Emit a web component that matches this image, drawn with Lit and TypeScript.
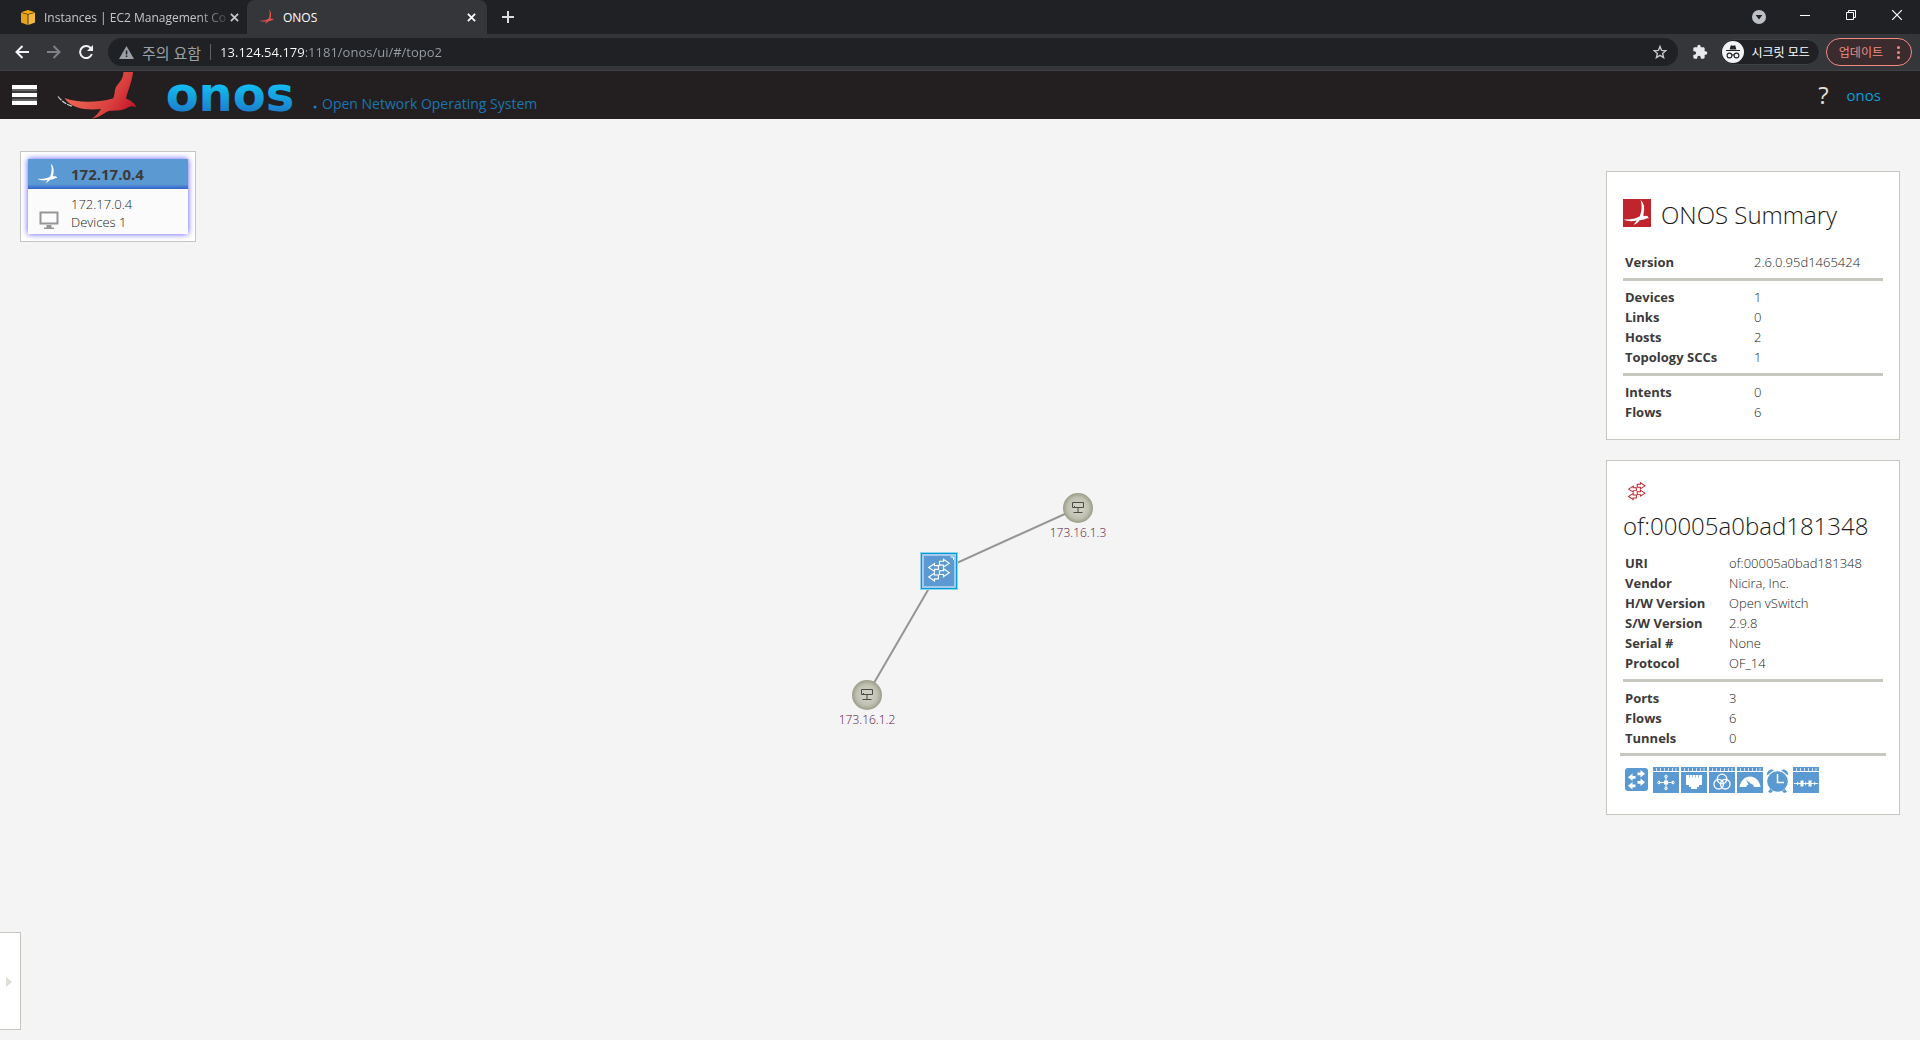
import { LitElement, html, svg, css } from "lit";
import { customElement, property } from "lit/decorators.js";

const bird = svg`<path d="M17.6 1C21.500 4.500 22 10 20.200 16.400L21.800 17.200C23.200 16.400 25 17 25.800 19.400C23.600 18.600 22.600 20 20.400 20.600L16.400 21.400C15.400 23 13.600 24.800 10.600 25.800C12 24.200 13 23 13.400 21.600C9 22.600 4 22.400 .6 20.200C6 20.800 12 20 16.800 17.200C18.800 12 19.400 7 17.600 1Z"/>`;

const switchArrows = svg`
  <path d="M12.800 5h4.400V2.600l6.400 4.600-6.400 4.600V9.400h-4.400z"/>
  <path d="M12.800 16h4.400v-2.400l6.400 4.600-6.400 4.600v-2.400h-4.400z"/>
  <path d="M11.600 10H7.200V7.600L.8 12.200l6.400 4.600v-2.400h4.400z"/>
  <path d="M11.600 21H7.200v-2.400L.8 23.200l6.400 4.600v-2.400h4.400z"/>`;

@customElement("browser-chrome")
export class BrowserChrome extends LitElement {
  static styles = css`
    :host { display: block; font-family: "Open Sans", "Noto Sans CJK KR", sans-serif; color: #e8eaed; }
    button { border: 0; padding: 0; margin: 0; background: none; color: inherit; font: inherit; display: flex; align-items: center; justify-content: center; }
    svg { display: block; flex: none; }
    .strip { display: flex; height: 34px; background: #202124; font-size: 12px; }
    .tab { display: flex; align-items: center; box-sizing: border-box; width: 247px; padding: 0 8px 0 20px; gap: 8px; color: #c4c7cb; }
    .tab.active { width: 240px; background: #35363a; border-radius: 8px 8px 0 0; color: #fff; padding: 0 8px 0 12px; }
    .label { flex: 1; white-space: nowrap; }
    .fade { margin-right: -8px; mask-image: linear-gradient(90deg, #000 84%, transparent 104%); }
    .close { width: 16px; height: 16px; flex: none; }
    .plus { width: 42px; }
    .spacer { flex: 1; }
    .win { width: 46px; height: 30px; }
    .bar { display: flex; align-items: center; height: 36px; background: #35363a; border-bottom: 1px solid #3f4043; padding: 0 8px 0 6px; }
    .nav { width: 32px; height: 28px; }
    .reload { margin-right: 6px; }
    .omni { display: flex; align-items: center; flex: 1; height: 28px; border-radius: 14px; background: #202124; padding: 0 11px; font-size: 13px; }
    .warn { color: #9aa0a6; gap: 8px; font-size: 15px; }
    .rule { width: 1px; height: 16px; background: #5f6368; margin: 0 9px; }
    .url { flex: 1; min-width: 0; border: 0; outline: 0; padding: 0; font: inherit; color: transparent; background: linear-gradient(90deg, #fff 85px, #9aa0a6 85px); background-clip: text; -webkit-background-clip: text; }
    .ext { width: 16px; margin: 0 12px 0 14px; }
    .incog { height: 26px; box-sizing: border-box; border: 1px solid #3f4043; border-radius: 13px; background: #202124; padding: 0 9px 0 1px; gap: 8px; font-size: 12px; color: #fff; white-space: nowrap; }
    .update { height: 28px; box-sizing: border-box; border: 1px solid #f28b82; border-radius: 14px; background: #3a2c2e; color: #f28b82; padding: 0 11px 0 12px; gap: 14px; font-size: 12px; margin-left: 6px; white-space: nowrap; }
  `;

  private cross(color: string, size: number) {
    return html`<svg width=${size} height=${size} viewBox="0 0 10 10" fill="none" stroke=${color} stroke-width=${size > 9 ? 1 : 2}><path d="M1 1l8 8M9 1l-8 8"/></svg>`;
  }

  render() {
    return html`
      <div class="strip">
        <div class="tab">
          <svg width="16" height="16" viewBox="0 0 16 16"><path d="M1 3.800L7.600 5.600V16L1 13.600z" fill="#e8a11c"/><path d="M15 3.800L8.400 5.600V16L15 13.600z" fill="#f3b73c"/><path d="M8 1l7 2.200-7 1.900-7-1.900z" fill="#f6a90f"/></svg>
          <span class="label fade">Instances | EC2 Management Co</span>
          <button class="close" aria-label="Close tab">${this.cross("#c4c7cb", 9)}</button>
        </div>
        <div class="tab active">
          <svg width="16" height="16" viewBox="0 0 28 28" fill="#e0524c">${bird}</svg>
          <span class="label">ONOS</span>
          <button class="close" aria-label="Close tab">${this.cross("#fff", 9)}</button>
        </div>
        <button class="plus" aria-label="New tab"><svg width="12" height="12" viewBox="0 0 12 12" stroke="#dadce0" stroke-width="2"><path d="M6 0v12M0 6h12"/></svg></button>
        <div class="spacer"></div>
        <button class="win" aria-label="Search tabs"><svg width="14" height="22" viewBox="0 0 14 22"><circle cx="7" cy="13" r="7" fill="#bdc1c6"/><path d="M3.600 11h6.800L7 15.400z" fill="#202124"/></svg></button>
        <button class="win" aria-label="Minimize"><svg width="10" height="10" viewBox="0 0 10 10" fill="#fff"><rect y="5" width="10" height="1"/></svg></button>
        <button class="win" aria-label="Restore"><svg width="10" height="10" viewBox="0 0 10 10" fill="none" stroke="#fff"><path d="M.5 2.500h7v7h-7zM2.500 2.500v-2h7v7h-2"/></svg></button>
        <button class="win" aria-label="Close window">${this.cross("#fff", 12)}</button>
      </div>
      <div class="bar">
        <button class="nav" aria-label="Back"><svg width="14" height="14" viewBox="0 0 14 14" fill="none" stroke="#f1f3f4" stroke-width="2"><path d="M14 7H2M7.500 1L1.500 7l6 6"/></svg></button>
        <button class="nav" aria-label="Forward"><svg width="14" height="14" viewBox="0 0 14 14" fill="none" stroke="#7e8185" stroke-width="2"><path d="M0 7h12M6.500 1l6 6-6 6"/></svg></button>
        <button class="nav reload" aria-label="Reload"><svg width="14" height="14" viewBox="0 0 14 14" fill="none" stroke="#f1f3f4" stroke-width="2"><path d="M12 3.600A6 6 0 1 0 12.800 9"/><path d="M14 0v6H8z" fill="#f1f3f4" stroke="none"/></svg></button>
        <div class="omni">
          <button class="warn"><svg width="15" height="14" viewBox="0 0 15 14"><path d="M7.500 1L15 14H0z" fill="#9aa0a6"/><path d="M6.800 5.400h1.500v4H6.800zM6.800 10.600h1.500v1.500H6.800z" fill="#202124"/></svg>주의 요함</button>
          <span class="rule"></span>
          <input class="url" aria-label="Address" .value=${"13.124.54.179:1181/onos/ui/#/topo2"}>
          <button aria-label="Bookmark"><svg width="14" height="14" viewBox="0 0 14 14" fill="none" stroke="#c4c7cb" stroke-width="1.400"><path d="M7 1.400l1.600 4 4.200.3-3.200 2.700 1 4.200L7 10.400l-3.600 2.200 1-4.200L1.200 5.700l4.200-.3z"/></svg></button>
        </div>
        <button class="ext" aria-label="Extensions"><svg width="16" height="16" viewBox="0 0 24 24" fill="#e8eaed"><path d="M20.500 11H19V7c0-1.100-.9-2-2-2h-4V3.500a2.500 2.500 0 0 0-5 0V5H4c-1.100 0-2 .9-2 2v3.800h1.500a2.700 2.700 0 0 1 0 5.400H2V20c0 1.100.9 2 2 2h3.800v-1.500a2.700 2.700 0 0 1 5.400 0V22H17c1.100 0 2-.9 2-2v-4h1.500a2.500 2.500 0 0 0 0-5z"/></svg></button>
        <button class="incog"><svg width="22" height="22" viewBox="0 0 22 22"><circle cx="11" cy="11" r="11" fill="#f1f3f4"/><path d="M7.600 8.500l1.200-4.300 2.200.6 2.200-.6 1.200 4.300z" fill="#202124"/><path d="M4 9.500h14" stroke="#202124"/><g fill="none" stroke="#202124" stroke-width="1.100"><circle cx="7.500" cy="14.500" r="2.400"/><circle cx="14.500" cy="14.500" r="2.400"/><path d="M9.900 14.200q1.100-.8 2.200 0"/></g></svg>시크릿 모드</button>
        <button class="update">업데이트<svg width="3" height="13" viewBox="0 0 3 13" fill="#f28b82"><circle cx="1.500" cy="1.500" r="1.500"/><circle cx="1.500" cy="6.500" r="1.500"/><circle cx="1.500" cy="11.500" r="1.500"/></svg></button>
      </div>`;
  }
}

@customElement("onos-masthead")
export class OnosMasthead extends LitElement {
  static styles = css`
    :host { display: flex; align-items: center; height: 48px; background: #231f20; padding: 0 39px 0 12px; font-family: "Open Sans", sans-serif; }
    svg { display: block; flex: none; overflow: visible; }
    button { border: 0; padding: 0; background: none; display: block; }
    .home { display: flex; align-items: center; margin-left: 21px; text-decoration: none; }
    .word { font-family: "DejaVu Sans", sans-serif; font-size: 48px; font-weight: 700; }
    .tag { color: #1b75b0; font-size: 14px; line-height: 20px; padding-top: 18px; margin-left: 5px; white-space: nowrap; }
    .spacer { flex: 1; }
    .help { color: #e0dfd5; text-decoration: none; font-size: 24px; line-height: 32px; margin-right: 18px; }
    .user { color: #009fdb; text-decoration: none; font-size: 15px; line-height: 20px; }
  `;

  render() {
    return html`
      <button aria-label="Navigation"><svg width="25" height="20" viewBox="0 0 25 20"><rect y="3" width="25" height="14" fill="#3c3a3a"/><path d="M0 5h25M0 15h25" stroke="#8d8c8c"/><path d="M0 2h25M0 10h25M0 18h25" stroke="#fff" stroke-width="4"/></svg></button>
      <a class="home" href="#/" aria-label="ONOS home">
        <svg width="88" height="48" viewBox="58 71 88 48">
          <defs><linearGradient id="wing" gradientUnits="userSpaceOnUse" x1="90" y1="80" x2="132" y2="108"><stop offset="0" stop-color="#e8604f"/><stop offset=".6" stop-color="#d93f3d"/><stop offset="1" stop-color="#c5182b"/></linearGradient></defs>
          <path d="M58 96.500q6 7.500 14 9.600" fill="none" stroke="#d8d6d6" stroke-width="1.200" stroke-dasharray="5 1"/>
          <path d="M64.500 98C78 103 96 103 113 98.500C115.500 94 114 91 116 87C119 82 123 80 123.500 72H133C132 82 128 90 126 98.500C128 100 129.500 99.600 131.500 101.500C134 103 135.500 105 136 107.500C133 105.500 130 106 127 108C121 111.500 114 109.800 108 111.300C103 114 98 118 92 118.500C96 116 98.500 113 101 109C88 110.500 71 109 64.500 98Z" fill="url(#wing)"/>
        </svg>
        <svg width="171" height="48" viewBox="0 0 171 48">
          <defs><linearGradient id="sea" gradientUnits="userSpaceOnUse" x1="0" y1="14" x2="0" y2="40"><stop offset="0" stop-color="#12bdf0"/><stop offset="1" stop-color="#1c80cc"/></linearGradient></defs>
          <text class="word" x="84" y="40" text-anchor="middle" fill="url(#sea)">onos</text>
          <circle cx="169" cy="36" r="1.500" fill="#1c80cc"/>
        </svg>
        <span class="tag">Open Network Operating System</span>
      </a>
      <div class="spacer"></div>
      <a class="help" href="#/help" aria-label="Help">?</a>
      <a class="user" href="#/user">onos</a>`;
  }
}

type Row = [string, string];

@customElement("props-table")
export class PropsTable extends LitElement {
  @property({ attribute: false }) groups: Row[][] = [];
  @property({ type: Boolean, reflect: true }) wide = false;

  static styles = css`
    :host { display: block; }
    table { border-collapse: collapse; font-size: 13px; line-height: 20px; color: #1c1a1b; }
    th { width: 104px; padding: 0 0 0 2px; text-align: left; font-weight: 700; color: #3c3a3a; }
    :host([wide]) th { width: 129px; }
    td { padding: 0; font-weight: 300; }
    hr { border: 0; height: 3px; background: #c7c7c0; margin: 6px 0; }
  `;

  render() {
    return this.groups.map((g, i) => html`
      ${i ? html`<hr>` : ""}
      <table><tbody>${g.map(([k, v]) => html`<tr><th scope="row">${k}</th><td>${v}</td></tr>`)}</tbody></table>`);
  }
}

const boxed = (inner: unknown) => svg`
  <rect width="26" height="4" fill="#5b99d2"/>
  <path d="M3.500 1v3M7.500 1v3M11.500 1v3M15.500 1v3M19.500 1v3M23 1v3" stroke="#cfe1f2"/>
  <rect y="5" width="26" height="21" fill="#5b99d2"/>${inner}`;

const ACTIONS: [string, unknown][] = [
  ["Show device view", svg`<rect y="1" x="0" width="23" height="23" rx="3" fill="#5b99d2"/><g fill="#fff"><path d="M12.500 5.500h3V3l4.500 3.800-4.500 3.800V8.200h-3zM12.500 14h3v-2.500l4.500 3.800-4.500 3.800v-2.400h-3zM10.500 9h-3V6.500L3 10.300l4.500 3.800v-2.400h3zM10.500 17.500h-3V15L3 18.800l4.500 3.800v-2.400h3z"/></g>`],
  ["Show flow view", boxed(svg`<g stroke="#fff" fill="none"><path d="M6 15.500h14M13 9v13"/><circle cx="6" cy="15.500" r="1.300"/><circle cx="20" cy="15.500" r="1.300"/><circle cx="13" cy="9.500" r="1.300"/><circle cx="13" cy="21.500" r="1.300"/></g><rect x="11" y="13.500" width="4" height="4" fill="#fff"/>`)],
  ["Show port view", boxed(svg`<path d="M5 8h16v10h-3v2h-2v2h-6v-2H8v-2H5z" fill="#fff"/><path d="M8.500 8v2.500M11.500 8v2.500M14.500 8v2.500M17.500 8v2.500" stroke="#9cc2e4"/>`)],
  ["Show group view", boxed(svg`<g stroke="#fff" fill="none" stroke-width="1.300"><circle cx="13" cy="12" r="4.800"/><circle cx="9.700" cy="17.200" r="4.800"/><circle cx="16.300" cy="17.200" r="4.800"/></g>`)],
  ["Show meter view", boxed(svg`<path d="M2.500 20C4 13 8 9.500 13 9.500S22.500 13 23.500 20H17Q16.500 17 13.500 16.500L9 12.500L11.500 17.500Q9.500 18 9 20z" fill="#fff"/>`)],
  ["Show pipeconf view", svg`<g fill="#5b99d2"><circle cx="12.500" cy="14.500" r="10.300"/><path d="M2 8.500A5 5 0 0 1 9 3zM23 8.500A5 5 0 0 0 16 3zM5 22l-2 3 3 1 2-2zM20 22l2 3-3 1-2-2z"/></g><path d="M12.500 7v8.500H19" fill="none" stroke="#fff" stroke-width="1.500"/>`],
  ["Show tunnels", boxed(svg`<path d="M1 16.500h24" stroke="#fff"/><rect x="7.500" y="13.500" width="3" height="6" fill="#fff"/><rect x="15.500" y="13.500" width="3" height="6" fill="#fff"/><path d="M4 14.500l2 2-2 2zM12 14.500l2 2-2 2zM21 14.500l2 2-2 2z" fill="#fff"/>`)],
];

@customElement("topo-view")
export class TopoView extends LitElement {
  static styles = css`
    :host { display: flex; position: relative; flex: 1; align-items: flex-start; justify-content: space-between; padding: 0 20px; background: #f4f4f4; font-family: "Open Sans", sans-serif; color: #1c1a1b; }
    .map { position: absolute; inset: 0; width: 100%; height: 100%; display: block; }
    .map text { font-size: 12px; font-weight: 300; fill: #561540; text-anchor: middle; }
    .left { display: flex; flex-direction: column; justify-content: space-between; align-self: stretch; position: relative; }
    .cluster { margin-top: 32px; border: 1px solid #c7c7c0; background: #fff; padding: 7px; }
    .inst { width: 160px; background: #fbfbfb; box-shadow: 0 0 6px #5a50ff; font-size: 13px; }
    .inst-head { display: flex; align-items: center; height: 30px; padding-left: 9px; gap: 12px; background: linear-gradient(#5b99d2 84%, #2f62cc); color: #3c3a3a; font-size: 15px; font-weight: 700; }
    .inst-body { display: flex; align-items: flex-end; height: 45px; padding: 0 0 3px 11px; gap: 12px; box-sizing: border-box; font-weight: 300; line-height: 18px; }
    .inst svg { display: block; flex: none; }
    .drawer { width: 21px; height: 98px; box-sizing: border-box; margin: 0 0 10px -20px; padding: 2px 0 0 6px; background: #fff; border: 1px solid #c7c7c0; border-left: 0; }
    .drawer svg { display: block; }
    .right { display: flex; flex-direction: column; gap: 20px; padding: 52px 0 20px; position: relative; width: 294px; }
    .panel { background: #fff; border: 1px solid #c7c7c0; box-sizing: border-box; padding: 0 16px 17px; }
    .panel svg { display: block; flex: none; }
    h2 { margin: 0; font-size: 24px; line-height: 32px; font-weight: 300; white-space: nowrap; }
    .title { display: flex; align-items: flex-start; gap: 10px; padding: 27px 0 21px; }
    .dev-icon { padding: 20px 0 9px 5px; }
    .dev-title { padding-bottom: 11px; }
    .foot { border: 0; height: 3px; background: #c7c7c0; margin: 5px -3px 11px; }
    .actions { display: flex; gap: 2px; padding: 0 2px 4px; }
    .actions button { border: 0; padding: 0; background: none; width: 26px; height: 26px; }
  `;

  render() {
    const host = (x: number, y: number, label: string) => svg`
      <circle cx=${x} cy=${y} r="15" fill="url(#stone)"/>
      <g transform="translate(${x - 6} ${y - 6})" fill="none" stroke="#4a4a48"><path d="M.5 .5h11v5H.5zM6 6v4M1.500 10.500h9"/><path d="M2 4.500h1" stroke-width="1"/></g>
      <text x=${x} y=${y + 29}>${label}</text>`;
    return html`
      <svg class="map" viewBox="0 0 1920 921" preserveAspectRatio="xMidYMid meet">
        <defs><radialGradient id="stone"><stop offset=".3" stop-color="#cfcfc2"/><stop offset=".7" stop-color="#c0c0b1"/><stop offset="1" stop-color="#9c9c8a"/></radialGradient></defs>
        <path d="M867 576L939 452L1078 389" fill="none" stroke="#959595" stroke-width="2"/>
        ${host(1078, 389, "173.16.1.3")}
        ${host(867, 576, "173.16.1.2")}
        <g transform="translate(920 433)">
          <rect width="38" height="38" fill="#8fd3ee"/>
          <rect x="1.500" y="1.500" width="35" height="35" fill="#a6c8ea" stroke="#009fdb"/>
          <rect x="4" y="4" width="30" height="30" fill="#5b99d2"/>
          <path d="M30.500 5h3v3" fill="none" stroke="#fff"/>
          <g transform="translate(8 5) scale(.9 .86)" fill="none" stroke="#fff" stroke-width="1.300">${switchArrows}</g>
        </g>
      </svg>
      <div class="left">
        <section class="cluster">
          <div class="inst">
            <div class="inst-head"><svg width="22" height="22" viewBox="0 0 28 28" fill="#fff">${bird}</svg>172.17.0.4</div>
            <div class="inst-body">
              <svg width="20" height="20" viewBox="0 0 20 20"><path d="M1.500 1.500h17v11h-17z" fill="none" stroke="#939598" stroke-width="2"/><path d="M7.500 14h5v2.500H15V18H5v-1.500h2.500z" fill="#939598"/></svg>
              <div>172.17.0.4<br>Devices 1</div>
            </div>
          </div>
        </section>
        <button class="drawer" aria-label="Toggle toolbar"><svg width="6" height="10" viewBox="0 0 6 10"><path d="M0 0l6 5-6 5z" fill="#deded6"/></svg></button>
      </div>
      <div class="right">
        <section class="panel">
          <div class="title">
            <svg width="28" height="28" viewBox="0 0 28 28"><rect width="28" height="28" fill="#c0242c"/><g fill="#fff">${bird}</g></svg>
            <h2>ONOS Summary</h2>
          </div>
          <props-table wide .groups=${[
            [["Version", "2.6.0.95d1465424"]],
            [["Devices", "1"], ["Links", "0"], ["Hosts", "2"], ["Topology SCCs", "1"]],
            [["Intents", "0"], ["Flows", "6"]],
          ]}></props-table>
        </section>
        <section class="panel">
          <div class="dev-icon"><svg width="18" height="20" viewBox="0 0 25 30" preserveAspectRatio="none" fill="none" stroke="#c0242c" stroke-width="1.400">${switchArrows}</svg></div>
          <h2 class="dev-title">of:00005a0bad181348</h2>
          <props-table .groups=${[
            [["URI", "of:00005a0bad181348"], ["Vendor", "Nicira, Inc."], ["H/W Version", "Open vSwitch"], ["S/W Version", "2.9.8"], ["Serial #", "None"], ["Protocol", "OF_14"]],
            [["Ports", "3"], ["Flows", "6"], ["Tunnels", "0"]],
          ]}></props-table>
          <hr class="foot">
          <div class="actions">${ACTIONS.map(([label, art]) => html`<button aria-label=${label}><svg width="26" height="26" viewBox="0 0 26 26">${art}</svg></button>`)}</div>
        </section>
      </div>`;
  }
}

@customElement("app-root")
export class AppRoot extends LitElement {
  static styles = css`
    :host { display: flex; flex-direction: column; min-height: 100vh; background: #f4f4f4; }
  `;

  render() {
    return html`<browser-chrome></browser-chrome><onos-masthead></onos-masthead><topo-view></topo-view>`;
  }
}
